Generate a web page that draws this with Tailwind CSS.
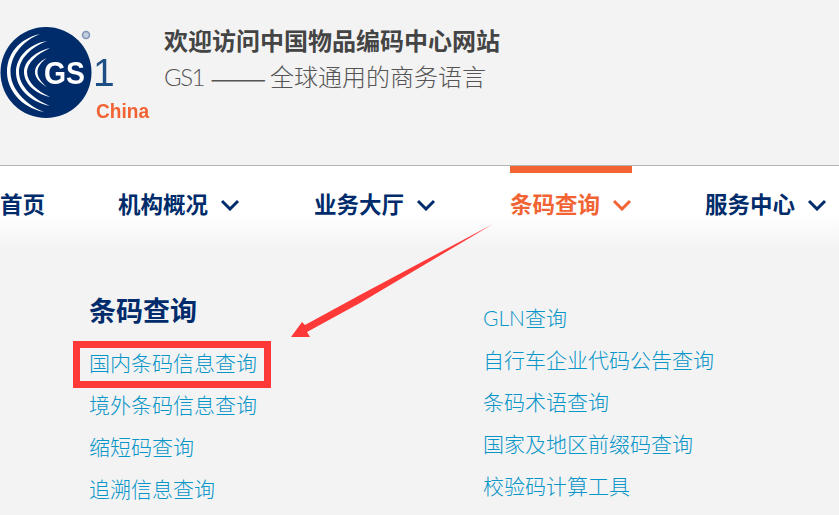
<!DOCTYPE html>
<html lang="zh-CN">
    <head>
        <meta charset="UTF-8">
        <title>条码查询</title>
        <script src="https://cdn.jsdelivr.net/npm/@tailwindcss/browser@4"></script>
    </head>
    <body class="relative w-[839px] h-[515px] overflow-hidden bg-[#f3f3f3] font-['Lato','Noto_Sans_CJK_SC',sans-serif]">
        <!-- Header -->
        <header class="flex h-[165px] items-start">
            <svg class="mt-[27px] w-[160px] h-[96px] shrink-0 blur-[0.4px]" viewBox="0 0 160 96">
                <circle cx="46" cy="45.5" r="45.5" fill="#002c6c"/>
                <g fill="#ffffff">
                    <path d="M40 7 C18 12 7 28 7 45 C7 62 20 80 44 85 C26 78 10.5 62 10.5 45 C10.5 29 22 14 40 7Z"/>
                    <path d="M47 14 C28 17 16 31 16 45 C16 60 28 74 50 79 C33 72 19 59 19 45 C19 32 31 20 47 14Z"/>
                    <path d="M50 21 C34 25 24 35 24 45 C24 56 34 66 50 70 C37 64 27 55 27 45 C27 36 37 27 50 21Z"/>
                    <path d="M47 31 C40 34 35 39 35 45 C35 51 40 56 47 60 C41 55 37.5 50 37.5 45 C37.5 40 41 35 47 31Z"/>
                </g>
                <text x="44" y="57" font-family="Liberation Sans" font-size="32" font-weight="700" fill="#ffffff" textLength="41" lengthAdjust="spacingAndGlyphs">GS</text>
                <text x="93" y="59" font-family="Liberation Sans" font-size="39" fill="#1d4f85">1</text>
                <circle cx="86" cy="8" r="3.5" fill="#c3cede" stroke="#7f93b5" stroke-width="1.5"/>
                <text x="96" y="91" font-family="Liberation Sans" font-size="20" font-weight="700" fill="#f26334" textLength="53" lengthAdjust="spacingAndGlyphs">China</text>
            </svg>
            <div class="ml-[4px] pt-[22px] text-[24px] leading-[38px]">
                <h1 class="font-bold text-[#444444]">欢迎访问中国物品编码中心网站</h1>
                <p class="-mt-[2px] font-light text-[#555555]"><span class="inline-block w-[46px] tracking-[-1.5px]">GS1</span><span class="inline-block w-[60px] h-[38px] align-top text-[34px] -translate-y-[1px] font-['Noto_Sans_CJK_SC']">——</span>全球通用的商务语言</p>
            </div>
        </header>

        <!-- Navigation -->
        <nav class="h-[84px] border-t border-[#b5b5b5] bg-gradient-to-b from-white from-60% to-[#f3f3f3] text-[22.5px] font-bold text-[#002c6c]">
            <ul class="flex">
                <li class="w-[118px] pt-[7px] leading-[64px]">首页</li>
                <li class="w-[196px] pt-[7px] leading-[64px]">
                    <span class="flex w-[122px] items-center justify-between">机构概况
                        <svg class="w-[20px] h-[12px]" viewBox="0 0 20 12" fill="none" stroke="currentColor" stroke-width="3"><path d="M2 2l8 8 8-8"/></svg>
                    </span>
                </li>
                <li class="w-[196px] pt-[7px] leading-[64px]">
                    <span class="flex w-[122px] items-center justify-between">业务大厅
                        <svg class="w-[20px] h-[12px]" viewBox="0 0 20 12" fill="none" stroke="currentColor" stroke-width="3"><path d="M2 2l8 8 8-8"/></svg>
                    </span>
                </li>
                <li class="w-[195px] text-[#f26334]">
                    <span class="flex w-[122px] items-center justify-between border-t-[7px] border-[#f26334] leading-[64px]">条码查询
                        <svg class="w-[20px] h-[12px]" viewBox="0 0 20 12" fill="none" stroke="currentColor" stroke-width="3"><path d="M2 2l8 8 8-8"/></svg>
                    </span>
                </li>
                <li class="w-[134px] shrink-0 pt-[7px] leading-[64px]">
                    <span class="flex w-[122px] items-center justify-between">服务中心
                        <svg class="w-[20px] h-[12px]" viewBox="0 0 20 12" fill="none" stroke="currentColor" stroke-width="3"><path d="M2 2l8 8 8-8"/></svg>
                    </span>
                </li>
            </ul>
        </nav>

        <!-- Dropdown -->
        <section class="flex pl-[89px] text-[21px] font-light text-[#0895c8]">
            <div class="w-[394px] pt-[44px]">
                <h2 class="mb-[13px] text-[27px] leading-[36px] font-bold text-[#002c6c]">条码查询</h2>
                <ul class="leading-[42px]">
                    <li>国内条码信息查询</li>
                    <li>境外条码信息查询</li>
                    <li>缩短码查询</li>
                    <li>追溯信息查询</li>
                </ul>
            </div>
            <ul class="pt-[48px] leading-[42px]">
                <li>GLN查询</li>
                <li>自行车企业代码公告查询</li>
                <li>条码术语查询</li>
                <li>国家及地区前缀码查询</li>
                <li>校验码计算工具</li>
            </ul>
        </section>

        <!-- Annotation drawn over the page -->
        <div class="absolute left-[73px] top-[341px] w-[198px] h-[47px] border-[7px] border-[#ff3838]"></div>
        <svg class="absolute left-0 top-0 w-[839px] h-[515px] pointer-events-none" viewBox="0 0 839 515">
            <polygon points="493,224 360,295 305,325 302,322 291,337 310,337 307,332 360,303" fill="#ff3838"/>
        </svg>
    </body>
</html>
